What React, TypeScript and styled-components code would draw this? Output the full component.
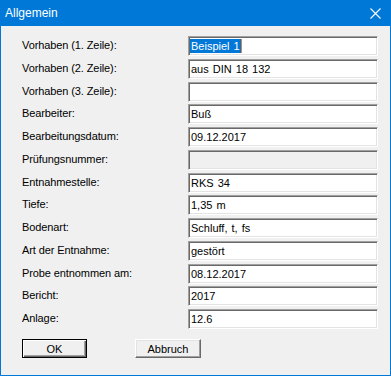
import React from 'react';
import styled, { createGlobalStyle } from 'styled-components';

const GlobalStyle = createGlobalStyle`
  html, body {
    margin: 0;
    padding: 0;
    background: #f0f0f0;
  }
`;

type Field = {
  label: string;
  value: string;
  disabled?: boolean;
  selected?: boolean;
};

const fields: Field[] = [
  { label: 'Vorhaben (1. Zeile):', value: 'Beispiel 1', selected: true },
  { label: 'Vorhaben (2. Zeile):', value: 'aus DIN 18 132' },
  { label: 'Vorhaben (3. Zeile):', value: '' },
  { label: 'Bearbeiter:', value: 'Buß' },
  { label: 'Bearbeitungsdatum:', value: '09.12.2017' },
  { label: 'Prüfungsnummer:', value: '', disabled: true },
  { label: 'Entnahmestelle:', value: 'RKS 34' },
  { label: 'Tiefe:', value: '1,35 m' },
  { label: 'Bodenart:', value: 'Schluff, t, fs' },
  { label: 'Art der Entnahme:', value: 'gestört' },
  { label: 'Probe entnommen am:', value: '08.12.2017' },
  { label: 'Bericht:', value: '2017' },
  { label: 'Anlage:', value: '12.6' },
];

const App = () => {
  return (
    <>
      <GlobalStyle />
      <Window>
        <TitleBar>
          <span>Allgemein</span>
          <CloseButton>
            <svg width="11" height="11" viewBox="0 0 11 11">
              <path d="M0.5 0.5 L10.5 10.5 M10.5 0.5 L0.5 10.5" stroke="#fff" strokeWidth="1.1" />
            </svg>
          </CloseButton>
        </TitleBar>
        <Body>
          <Form>
            {fields.map((f) => (
              <React.Fragment key={f.label}>
                <Label>{f.label}</Label>
                <TextBox $disabled={f.disabled}>
                  {f.selected ? <Selection>{f.value}</Selection> : f.value}
                </TextBox>
              </React.Fragment>
            ))}
          </Form>
          <Buttons>
            <Button $default $width={65}>OK</Button>
            <Button $width={66}>Abbruch</Button>
          </Buttons>
        </Body>
      </Window>
    </>
  );
};

export default App;

const Window = styled.div`
  width: 391px;
  height: 376px;
  box-sizing: border-box;
  border: 1px solid #0078d7;
  border-top: none;
  background: #f0f0f0;
  display: flex;
  flex-direction: column;
  font-family: 'Liberation Sans', Arial, sans-serif;
  font-size: 11px;
  color: #000;
`;

const TitleBar = styled.div`
  height: 26px;
  margin: 0 -1px;
  padding: 0 10px 0 5px;
  background: #0078d7;
  color: #fff;
  font-size: 12px;
  display: flex;
  align-items: center;
  justify-content: space-between;

  > span {
    padding-bottom: 1px;
  }
`;

const CloseButton = styled.div`
  width: 11px;
  height: 11px;
  display: flex;
  margin-top: 1px;
`;

const Body = styled.div`
  padding: 10px 12px 0 21px;
  display: flex;
  flex-direction: column;
`;

const Form = styled.div`
  display: grid;
  grid-template-columns: 1fr 190px;
  grid-auto-rows: 20px;
  row-gap: 2.75px;
  align-items: center;
`;

const Label = styled.div`
  letter-spacing: -0.1px;
  padding-bottom: 2px;
  white-space: nowrap;
`;

const TextBox = styled.div<{ $disabled?: boolean }>`
  height: 20px;
  box-sizing: border-box;
  border: 1px solid;
  border-color: #a0a0a0 #ffffff #ffffff #a0a0a0;
  box-shadow: inset 1px 1px #696969, inset -1px -1px #e3e3e3;
  background: ${(p) => (p.$disabled ? '#f0f0f0' : '#ffffff')};
  padding: 0 2px 0 2px;
  display: flex;
  align-items: center;
  white-space: nowrap;
  overflow: hidden;
  word-spacing: 1px;
`;

const Selection = styled.span`
  background: #0078d7;
  color: #fff;
  padding: 1px 1px 1px 1px;
  margin-left: -1px;
  border-right: 1px solid #e08040;
`;

const Buttons = styled.div`
  display: flex;
  gap: 48px;
  margin-top: 10px;
`;

const Button = styled.div<{ $default?: boolean; $width: number }>`
  width: ${(p) => p.$width}px;
  height: 19px;
  box-sizing: border-box;
  background: #f0f0f0;
  display: flex;
  align-items: center;
  justify-content: center;
  font-size: 11px;
  border: 1px solid;
  border-color: ${(p) => (p.$default ? '#000000' : '#ffffff #696969 #696969 #ffffff')};
  box-shadow: ${(p) =>
    p.$default
      ? 'inset 1px 1px #ffffff, inset -1px -1px #696969, inset -2px -2px #a0a0a0'
      : 'inset -1px -1px #a0a0a0, inset 1px 1px #e3e3e3'};
`;
